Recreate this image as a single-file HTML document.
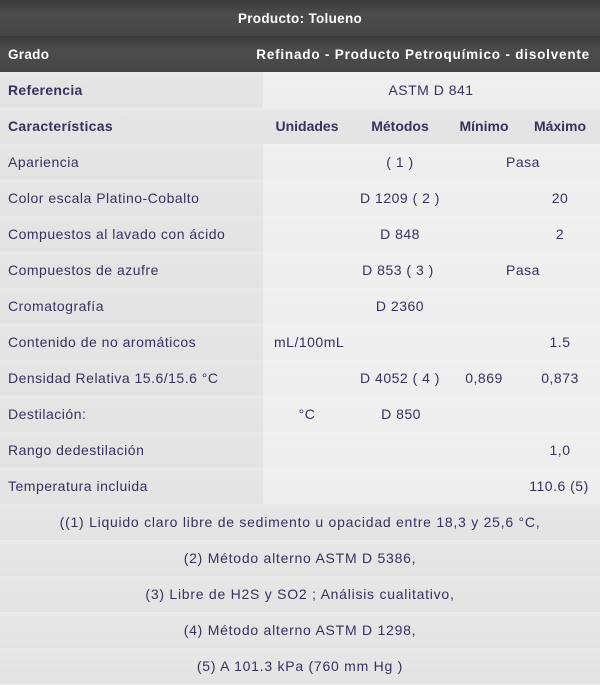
<!DOCTYPE html>
<html><head><meta charset="utf-8"><style>
*{margin:0;padding:0;box-sizing:border-box}
body{width:600px;height:684px;overflow:hidden;font-family:"Liberation Sans",sans-serif;font-size:14px;color:#35325f;background:#eee;letter-spacing:.5px}
.r{position:absolute;left:0;width:600px;height:36px}
.h{background:linear-gradient(#3a3a3a,#4c4c4c 40%,#464646);color:#fff;font-weight:bold;font-size:13.5px;letter-spacing:.3px}
.d .l{position:absolute;left:0;top:0;width:263px;height:36px;background:linear-gradient(#ebebeb,#e5e5e5 15%,#e3e3e3)}
.d .rt{position:absolute;left:263px;top:0;width:337px;height:36px;background:linear-gradient(#f1f1f1,#efefef 15%,#eeeeee)}
.f{background:linear-gradient(#ececec,#e6e6e6 15%,#e3e3e3);text-align:center;line-height:37px;letter-spacing:.75px}
.t{position:absolute;top:0;line-height:37px;white-space:nowrap}
.c{transform:translateX(-50%)}
.b{font-weight:bold;letter-spacing:0}
</style></head><body>
<div class="r h" style="top:0;text-align:center;line-height:37px">Producto: Tolueno</div>
<div class="r h" style="top:36px"><span class="t" style="left:8px">Grado</span><span class="t" style="right:10px;letter-spacing:.8px">Refinado - Producto Petroquímico - disolvente</span></div>
<div class="r d" style="top:72px"><div class="l"></div><div class="rt"></div><span class="t b" style="left:8px;letter-spacing:.3px">Referencia</span><span class="t c" style="left:431px">ASTM D 841</span></div>
<div class="r d" style="top:108px"><div class="l"></div><div class="rt" style="background:linear-gradient(#ebebeb,#e5e5e5 15%,#e3e3e3)"></div><span class="t b" style="left:8px;letter-spacing:.3px">Características</span><span class="t b c" style="left:307px">Unidades</span><span class="t b c" style="left:400px">Métodos</span><span class="t b c" style="left:484px">Mínimo</span><span class="t b c" style="left:560px">Máximo</span></div>
<div class="r d" style="top:144px"><div class="l"></div><div class="rt"></div><span class="t" style="left:8px">Apariencia</span><span class="t c" style="left:400px">( 1 )</span><span class="t c" style="left:523px">Pasa</span></div>
<div class="r d" style="top:180px"><div class="l"></div><div class="rt"></div><span class="t" style="left:8px">Color escala Platino-Cobalto</span><span class="t c" style="left:400px">D 1209 ( 2 )</span><span class="t c" style="left:560px">20</span></div>
<div class="r d" style="top:216px"><div class="l"></div><div class="rt"></div><span class="t" style="left:8px">Compuestos al lavado con ácido</span><span class="t c" style="left:400px">D 848</span><span class="t c" style="left:560px">2</span></div>
<div class="r d" style="top:252px"><div class="l"></div><div class="rt"></div><span class="t" style="left:8px">Compuestos de azufre</span><span class="t c" style="left:398px">D 853 ( 3 )</span><span class="t c" style="left:523px">Pasa</span></div>
<div class="r d" style="top:288px"><div class="l"></div><div class="rt"></div><span class="t" style="left:8px">Cromatografía</span><span class="t c" style="left:400px">D 2360</span></div>
<div class="r d" style="top:324px"><div class="l"></div><div class="rt"></div><span class="t" style="left:8px">Contenido de no aromáticos</span><span class="t" style="left:274px">mL/100mL</span><span class="t c" style="left:560px">1.5</span></div>
<div class="r d" style="top:360px"><div class="l"></div><div class="rt"></div><span class="t" style="left:8px">Densidad Relativa 15.6/15.6 °C</span><span class="t c" style="left:400px">D 4052 ( 4 )</span><span class="t c" style="left:484px">0,869</span><span class="t c" style="left:560px">0,873</span></div>
<div class="r d" style="top:396px"><div class="l"></div><div class="rt"></div><span class="t" style="left:8px">Destilación:</span><span class="t c" style="left:307px">°C</span><span class="t c" style="left:401px">D 850</span></div>
<div class="r d" style="top:432px"><div class="l"></div><div class="rt"></div><span class="t" style="left:8px">Rango dedestilación</span><span class="t c" style="left:560px">1,0</span></div>
<div class="r d" style="top:468px"><div class="l"></div><div class="rt"></div><span class="t" style="left:8px">Temperatura incluida</span><span class="t c" style="left:559px">110.6 (5)</span></div>
<div class="r f" style="top:504px">((1) Liquido claro libre de sedimento u opacidad entre 18,3 y 25,6 °C,</div>
<div class="r f" style="top:540px">(2) Método alterno ASTM D 5386,</div>
<div class="r f" style="top:576px">(3) Libre de H2S y SO2 ; Análisis cualitativo,</div>
<div class="r f" style="top:612px">(4) Método alterno ASTM D 1298,</div>
<div class="r f" style="top:648px">(5) A 101.3 kPa (760 mm Hg )</div>
</body></html>
